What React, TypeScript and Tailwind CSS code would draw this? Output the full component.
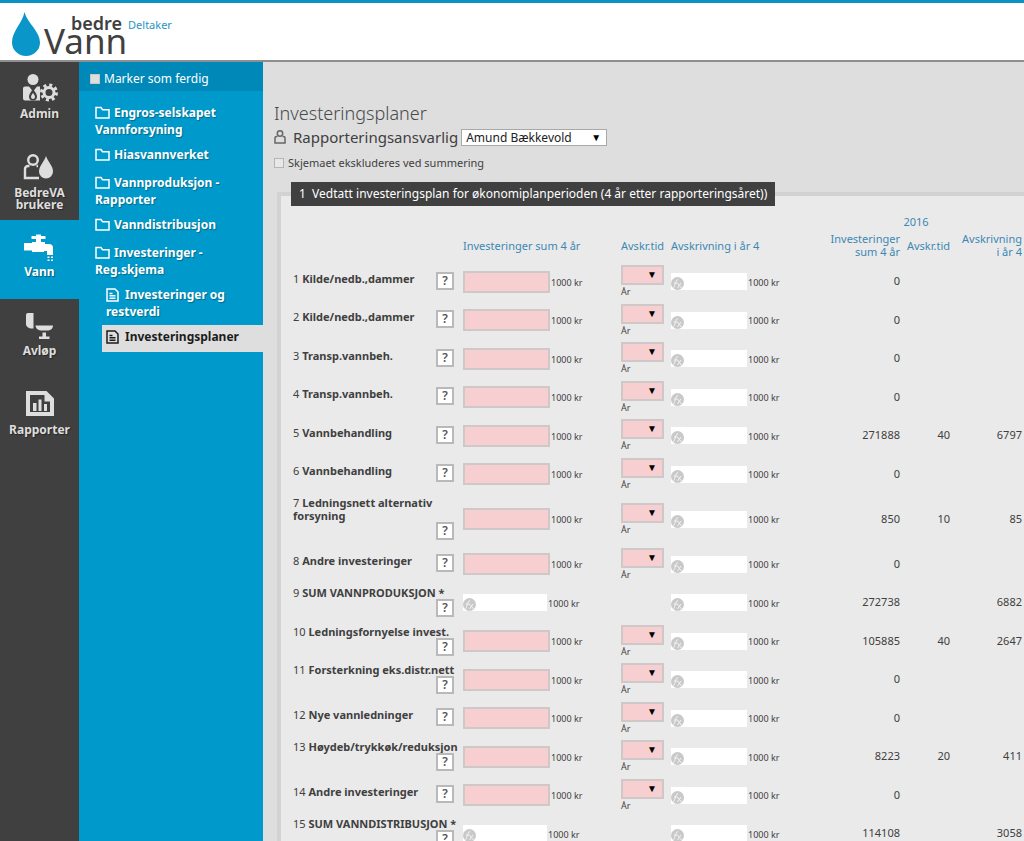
import React from 'react';

type Row = {
  no: number;
  label: string;
  sum?: boolean;
  values: [string, string, string];
};

const rows: Row[] = [
  { no: 1, label: 'Kilde/nedb.,dammer', values: ['0', '', ''] },
  { no: 2, label: 'Kilde/nedb.,dammer', values: ['0', '', ''] },
  { no: 3, label: 'Transp.vannbeh.', values: ['0', '', ''] },
  { no: 4, label: 'Transp.vannbeh.', values: ['0', '', ''] },
  { no: 5, label: 'Vannbehandling', values: ['271888', '40', '6797'] },
  { no: 6, label: 'Vannbehandling', values: ['0', '', ''] },
  { no: 7, label: 'Ledningsnett alternativ forsyning', values: ['850', '10', '85'] },
  { no: 8, label: 'Andre investeringer', values: ['0', '', ''] },
  { no: 9, label: 'SUM VANNPRODUKSJON *', sum: true, values: ['272738', '', '6882'] },
  { no: 10, label: 'Ledningsfornyelse invest.', values: ['105885', '40', '2647'] },
  { no: 11, label: 'Forsterkning eks.distr.nett', values: ['0', '', ''] },
  { no: 12, label: 'Nye vannledninger', values: ['0', '', ''] },
  { no: 13, label: 'Høydeb/trykkøk/reduksjon', values: ['8223', '20', '411'] },
  { no: 14, label: 'Andre investeringer', values: ['0', '', ''] },
  { no: 15, label: 'SUM VANNDISTRIBUSJON *', sum: true, values: ['114108', '', '3058'] },
];

const AdminIcon = () => (
  <svg width="36" height="30" viewBox="0 0 36 30" fill="currentColor">
    <circle cx="11" cy="5.500" r="5.500" />
    <path d="M3 12.500h4l4 5 4-5h3v14H3a2 2 0 0 1-2-2v-10a2 2 0 0 1 2-2z" />
    <path d="M11 15c2 3 4 5 4 7.500a4 4 0 0 1-8 0c0-2.500 2-4.500 4-7.500z" fill="#404040" />
    <path d="M11 19c1 1.500 2 2.500 2 4a2 2 0 0 1-4 0c0-1.500 1-2.500 2-4z" />
    <circle cx="27" cy="18.500" r="5" fill="none" stroke="currentColor" strokeWidth="3" />
    <circle cx="27" cy="18.500" r="7.500" fill="none" stroke="currentColor" strokeWidth="3" strokeDasharray="3 2.890" />
  </svg>
);

const UsersIcon = () => (
  <svg width="36" height="30" viewBox="0 0 36 30" fill="currentColor">
    <g fill="none" stroke="currentColor" strokeWidth="2.400">
      <circle cx="11" cy="7" r="4.800" />
      <path d="M7.500 13H6a3 3 0 0 0-3 3v9h14M14.500 13h1.500" />
    </g>
    <path d="M24 3c2 6 7 10 7 15.500a7 7 0 0 1-14 0C17 13 22 9 24 3z" />
  </svg>
);

const TapIcon = () => (
  <svg width="36" height="30" viewBox="0 0 36 30" fill="currentColor">
    <path d="M9.500 4H14V2.500h5V4h4.500v3H19v3h-5V7H9.500z" />
    <path d="M2 11h8v-1h13v2h4a4 4 0 0 1 4 4v7h-6v-4h-3v1H10v-1.500H2z" />
    <path d="M25.500 24.500h2v1.500h-2zM29 24.500h2v1.500h-2zM25.500 27.500h2V29h-2zM29 27.500h2V29h-2z" />
  </svg>
);

const ToiletIcon = () => (
  <svg width="36" height="30" viewBox="0 0 36 30" fill="currentColor">
    <path d="M6 2h5.500v15.500H8.500C5.500 17 4 15 4 13V4a2 2 0 0 1 2-2z" />
    <path d="M13.500 14.500h17.500c0 3-2.500 5-6 5h-5c-3.500 0-6.500-2-6.500-5z" />
    <path d="M20.500 21.500H24v4h3.500V28H17v-2.500h3.500z" />
  </svg>
);

const ReportIcon = () => (
  <svg width="36" height="30" viewBox="0 0 36 30" fill="currentColor">
    <path fillRule="evenodd" d="M4 1h20.500l7.500 7.500V26H4zM8 5v17h20V11.500h-5.500V5z" />
    <path d="M11 13h3.500v8H11zM16.500 9.500h3V21h-3zM22 14h3v7h-3z" />
  </svg>
);

const FolderIcon = () => (
  <svg className="mr-1 inline-block align-[-6px]" width="15" height="17" viewBox="0 0 15 17" fill="none" stroke="currentColor" strokeWidth="1.500">
    <path d="M1 12V1.500h5l1.500 2.200H14V12z" />
  </svg>
);

const PageIcon = () => (
  <svg className="mr-1.5 inline-block align-[-6px]" width="13" height="17" viewBox="0 0 13 17" fill="none" stroke="currentColor" strokeWidth="1.500">
    <path d="M1 1h8l3 3v9H1zM3.500 5.500h3M3.500 7.800h6M3.500 10.200h6" />
  </svg>
);

const navItems = [
  { label: 'Admin', icon: <AdminIcon /> },
  { label: 'BedreVA brukere', icon: <UsersIcon /> },
  { label: 'Vann', icon: <TapIcon />, active: true },
  { label: 'Avløp', icon: <ToiletIcon /> },
  { label: 'Rapporter', icon: <ReportIcon /> },
];

const folders = [
  'Engros-selskapet Vannforsyning',
  'Hiasvannverket',
  'Vannproduksjon - Rapporter',
  'Vanndistribusjon',
  'Investeringer - Reg.skjema',
];

function Header() {
  return (
    <header className="flex h-[62px] shrink-0 items-start border-t-[3px] border-b-2 border-t-[#0b92c4] border-b-[#8f8f8f] bg-white pl-3">
      <svg className="mt-[9px]" width="28" height="44" viewBox="0 0 28 44" fill="#0a96c8">
        <path d="M12.500 0C15 11 28 19 28 30.500A14 13.500 0 0 1 0 30.500C0 19 10.500 11 12.500 0z" />
      </svg>
      <div className="ml-1 pt-2 text-[#404040]">
        <div className="flex items-end pl-[27px]">
          <span className="text-lg leading-6 font-semibold">bedre</span>
          <span className="ml-1.5 text-[11px] leading-5 text-[#2a94c4]">Deltaker</span>
        </div>
        <div className="-mt-3 text-[35px] leading-9">Vann</div>
      </div>
    </header>
  );
}

function MainNav() {
  return (
    <nav className="w-[79px] shrink-0 bg-[#404040]">
      {navItems.map(item => (
        <a
          key={item.label}
          href="#"
          className={`flex h-[79px] flex-col items-center px-1 pt-3 text-center text-xs leading-3 font-bold [text-shadow:1px_1px_1px_rgba(0,0,0,0.4)] ${
            item.active ? 'bg-[#0099cc] text-white' : 'text-[#dedede]'
          }`}
        >
          {item.icon}
          <span className="mt-1">{item.label}</span>
        </a>
      ))}
    </nav>
  );
}

function SubMenu() {
  return (
    <aside className="w-[184px] shrink-0 bg-[#0099cc] text-xs text-white">
      <label className="flex h-[29px] items-center gap-1 bg-[#0088b8] pt-1 pl-[11px]">
        <input type="checkbox" className="size-[10px] appearance-none border border-[#c8c8c8] bg-[#dedede]" />
        Marker som ferdig
      </label>
      <ul className="pt-[15px] pl-4 leading-[14px] font-bold [text-shadow:1px_1px_1px_rgba(0,0,0,0.3)]">
        {folders.map(name => (
          <li key={name} className="max-w-[136px] pb-[11px]">
            <a href="#"><FolderIcon />{name}</a>
          </li>
        ))}
        <li className="max-w-[146px] pb-[6px] pl-[11px]">
          <a href="#"><PageIcon />Investeringer og restverdi</a>
        </li>
        <li className="ml-[7px] bg-[#dedede] py-[5px] pl-1 text-[#1c1c1c] [text-shadow:none]">
          <a href="#"><PageIcon />Investeringsplaner</a>
        </li>
      </ul>
    </aside>
  );
}

function FormulaInput({ label, wide }: { label: string; wide?: boolean }) {
  return (
    <div className="flex items-center">
      <div className={`relative h-[17px] bg-white ${wide ? 'w-[84px]' : 'w-[76px]'}`}>
        <svg className="absolute bottom-0 left-0" width="13" height="13" viewBox="0 0 13 13">
          <circle cx="6.500" cy="6.500" r="6.500" fill="#c9c9c9" />
          <path d="M2 11c2 0 2-8 5-8.500M3 6h3.500M6.500 6l4 5M10 6l-3.500 5" fill="none" stroke="#f4f4f4" />
        </svg>
        <input type="text" readOnly aria-label={label} className="block h-full w-full bg-transparent pl-4 outline-none" />
      </div>
      <span className="ml-px pt-0.5 text-[9px] leading-3">1000 kr</span>
    </div>
  );
}

function PlanRow({ row }: { row: Row }) {
  return (
    <tr className={row.no === 7 ? 'h-[52px]' : 'odd:h-[39px] even:h-[38px]'}>
      <th scope="row" className="pb-0.5 text-left font-normal">
        <div className="flex flex-wrap items-start text-[11px] leading-[13px]">
          <span>
            {row.no} <b>{row.label}</b>
          </span>
          <button type="button" className="mr-[9px] ml-auto size-[18px] border-2 border-[#b9b9b9] bg-white text-xs leading-[14px] font-semibold text-[#555]">
            ?
          </button>
        </div>
      </th>
      <td>
        {row.sum ? (
          <FormulaInput label={`${row.label} investeringer`} wide />
        ) : (
          <div className="flex items-center">
            <input type="text" aria-label={`${row.label} investeringer`} className="h-[22px] w-[87px] border-2 border-[#cfc8c8] bg-[#f7cfd1] px-1" />
            <span className="ml-px pt-0.5 text-[9px] leading-3">1000 kr</span>
          </div>
        )}
      </td>
      <td>
        {!row.sum && (
          <>
            <div className="relative h-5 w-[43px]">
              <select aria-label={`${row.label} avskrivningstid`} className="block h-full w-full appearance-none border-2 border-[#cfc8c8] bg-[#f7cfd1]">
                <option></option>
                <option>10</option>
                <option>20</option>
                <option>40</option>
              </select>
              <span className="pointer-events-none absolute top-0 right-[7px] text-[10px] leading-[18px] text-black">▼</span>
            </div>
            <div className="pt-px text-[9px] leading-3">År</div>
          </>
        )}
      </td>
      <td>
        <FormulaInput label={`${row.label} avskrivning`} />
      </td>
      {row.values.map((value, i) => (
        <td key={i} className="text-right">{value}</td>
      ))}
    </tr>
  );
}

function PlanTable() {
  return (
    <table className="mt-2 w-full table-fixed border-collapse text-[11px]">
      <colgroup>
        <col className="w-[170px]" />
        <col className="w-[158px]" />
        <col className="w-[50px]" />
        <col />
        <col className="w-[90px]" />
        <col className="w-[50px]" />
        <col className="w-[72px]" />
      </colgroup>
      <thead className="leading-[13px] text-[#3d88b3]">
        <tr className="h-[14px]">
          <td colSpan={4}></td>
          <th colSpan={3} className="font-normal">2016</th>
        </tr>
        <tr className="h-[34px]">
          <td></td>
          <th scope="col" className="text-left font-normal">Investeringer sum 4 år</th>
          <th scope="col" className="text-left font-normal">Avskr.tid</th>
          <th scope="col" className="text-left font-normal">Avskrivning i år 4</th>
          <th scope="col" className="pl-5 text-right font-normal">Investeringer sum 4 år</th>
          <th scope="col" className="text-right font-normal">Avskr.tid</th>
          <th scope="col" className="pl-2 text-right font-normal">Avskrivning i år 4</th>
        </tr>
      </thead>
      <tbody>
        {rows.map(row => (
          <PlanRow key={row.no} row={row} />
        ))}
      </tbody>
    </table>
  );
}

export default function App() {
  return (
    <div className="flex h-screen flex-col overflow-hidden bg-[#dedede] font-['Noto_Sans',sans-serif] text-[#404040]">
      <Header />
      <div className="flex min-h-0 flex-1">
        <MainNav />
        <SubMenu />
        <main className="min-w-0 flex-1 pt-[39px] pl-[11px]">
          <h1 className="text-lg leading-6 font-light text-[#4a4a4a]">Investeringsplaner</h1>
          <div className="flex h-6 items-center text-[15px]">
            <svg className="mr-[7px]" width="12" height="14" viewBox="0 0 12 14" fill="none" stroke="#666" strokeWidth="1.500">
              <circle cx="6" cy="3.500" r="2.700" />
              <path d="M3.500 6.500H2.500A1.500 1.500 0 0 0 1 8v5h10V8a1.500 1.500 0 0 0-1.500-1.500h-1" />
            </svg>
            <label htmlFor="ansvarlig">Rapporteringsansvarlig</label>
            <div className="relative ml-[3px]">
              <select id="ansvarlig" className="block h-[17px] w-[146px] appearance-none border border-[#a9a9a9] bg-white pl-1 text-xs leading-[15px] text-[#222]">
                <option>Amund Bækkevold</option>
              </select>
              <span className="pointer-events-none absolute top-0 right-1.5 text-[10px] leading-4 text-black">▼</span>
            </div>
          </div>
          <label className="mt-1 flex h-5 items-center gap-1 text-[11px]">
            <input type="checkbox" className="size-[10px] appearance-none border border-[#b5b5b5] bg-[#e8e8e8]" />
            Skjemaet ekskluderes ved summering
          </label>
          <fieldset className="mt-[9px] ml-[3px] min-w-0 border-4 border-r-0 border-[#d2d2d2] bg-[#eaeaea] pr-0.5 pl-3">
            <legend className="-ml-0.5 h-6 bg-[#404040] px-2 text-xs leading-6 text-white">
              1&nbsp; Vedtatt investeringsplan for økonomiplanperioden (4 år etter rapporteringsåret))
            </legend>
            <PlanTable />
          </fieldset>
        </main>
      </div>
    </div>
  );
}
